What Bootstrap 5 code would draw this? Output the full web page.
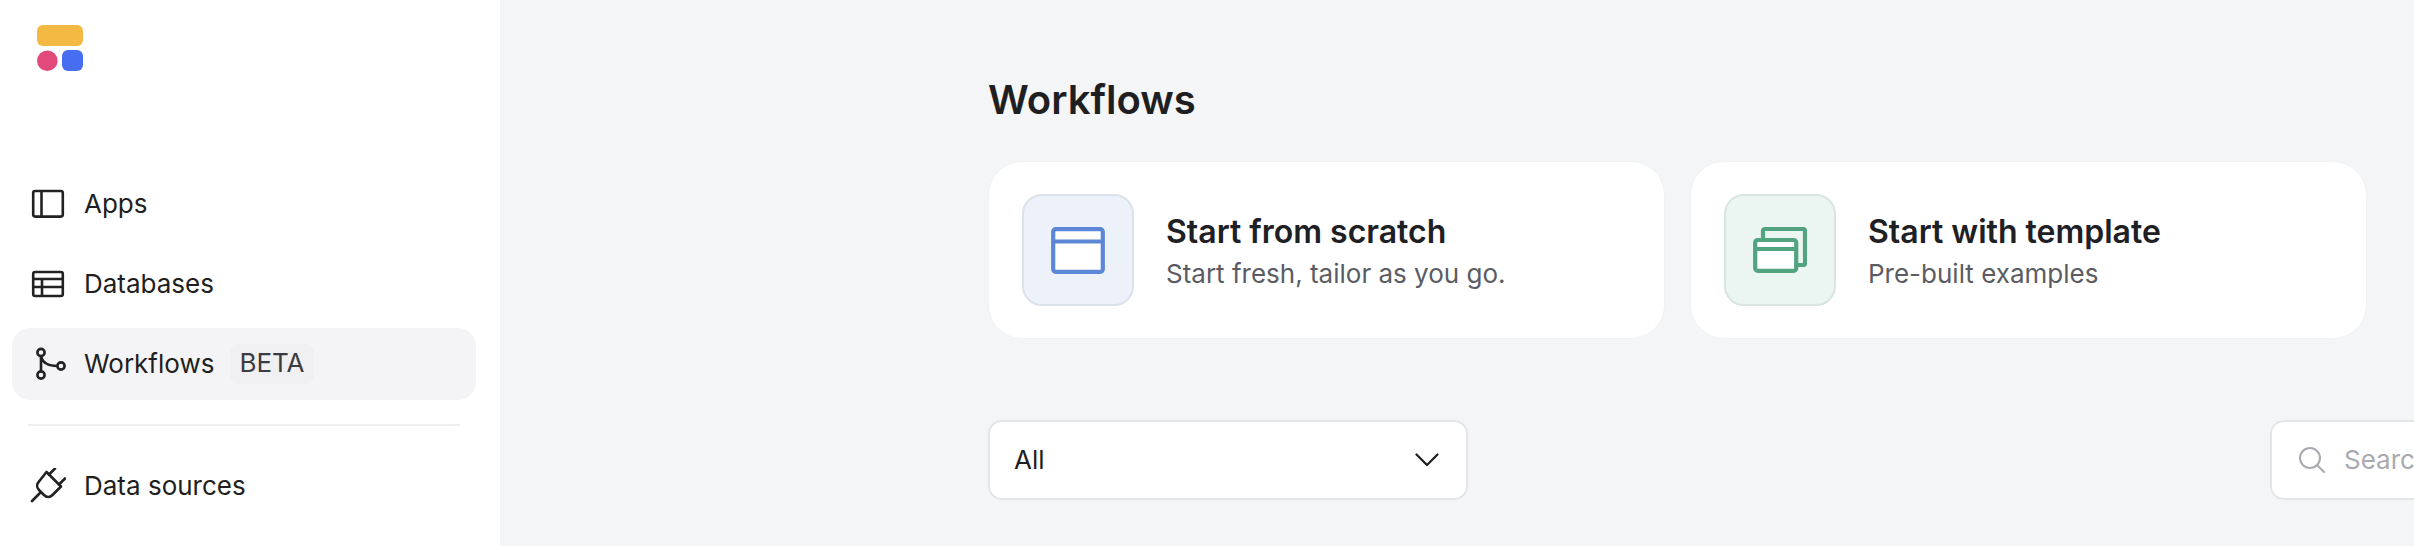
<!DOCTYPE html>
<html lang="en">
<head>
    <meta charset="UTF-8">
    <title>Workflows</title>
    <link href="https://cdn.jsdelivr.net/npm/bootstrap@5.3.0/dist/css/bootstrap.min.css" rel="stylesheet">
    <style>
        html, body {
            height: 100%;
            overflow: hidden;
        }
        body {
            background-color: #f4f5f7;
            font-family: "Inter", "Liberation Sans", sans-serif;
            color: #1f1f21;
        }
        .side-bar {
            width: 500px;
            height: 546px;
            flex: none;
            padding: 25px 24px 0 12px;
        }
        .side-logo {
            margin-left: 25px;
            margin-bottom: 97px;
            display: block;
        }
        .side-link {
            height: 72px;
            padding: 0 0 2px 18px;
            gap: 18px;
            color: #1f1f21;
            font-size: 26px;
            border-radius: 18px;
        }
        .side-link svg { margin-top: 2px; }
        .side-link:hover { color: #1f1f21; }
        .side-link.on { background-color: #f4f4f7; }
        .beta-tag {
            background-color: #f0f0f3;
            color: #3b3b41;
            font-size: 26px;
            font-weight: 400;
            padding: 0 9px;
            height: 40px;
            line-height: 38px;
            margin-top: 2px;
            border-radius: 8px;
            margin-left: -2px;
        }
        .side-line {
            margin: 24px 16px 24px 16px;
            border-top: 2px solid #eeeef3;
            opacity: 1;
        }
        .main-area {
            padding-top: 76px;
            margin-left: -500px;
            padding-left: 988px;
            width: 2650px;
            flex: none;
        }
        .page-title {
            font-size: 40px;
            line-height: 48px;
            font-weight: 600;
            margin-bottom: 37px;
            color: #1f1f21;
        }
        .start-row {
            gap: 25px;
        }
        .start-card {
            width: 677px;
            height: 178px;
            border: 1px solid #f1f2f4;
            border-radius: 34px;
            padding: 0 33px;
            gap: 32px;
        }
        .start-icon {
            width: 112px;
            height: 112px;
            flex: none;
            border-radius: 20px;
        }
        .start-icon.blue { background-color: #edf2fa; border: 2px solid #dbe2ec; }
        .start-icon.green { background-color: #ebf5f1; border: 2px solid #d8e5e0; }
        .start-text {
            padding-top: 3px;
        }
        .start-title {
            font-size: 32px;
            line-height: 42px;
            font-weight: 600;
            color: #1e2024;
        }
        .start-sub {
            font-size: 26px;
            line-height: 36px;
            margin-top: 3px;
            color: #5b5c63;
        }
        .filter-row {
            margin-top: 81px;
        }
        .type-select {
            width: 480px;
            height: 80px;
            font-size: 26px;
            color: #1f1f21;
            border: 2px solid #e4e5e8;
            border-radius: 14px;
            padding: 0 24px 2px;
            background-image: url("data:image/svg+xml,%3csvg xmlns='http://www.w3.org/2000/svg' viewBox='0 0 24 14'%3e%3cpath fill='none' stroke='%231f1f21' stroke-width='2.2' stroke-linecap='round' stroke-linejoin='round' d='M1.5 1.5 12 12 22.5 1.5'/%3e%3c/svg%3e");
            background-size: 24px 14px;
            background-position: right 27px center;
        }
        .search-box {
            width: 380px;
            height: 80px;
            border: 2px solid #e4e5e8;
            border-radius: 14px;
            padding-left: 26px;
            gap: 18px;
        }
        .search-field {
            font-size: 26px;
            padding: 0 0 2px;
            background: transparent;
        }
        .search-field::placeholder { color: #a9aab0; }
    </style>
</head>
<body>

<div class="d-flex">
    <aside class="side-bar bg-white">
        <svg class="side-logo" width="46" height="46" viewBox="0 0 46 46">
            <rect width="46" height="21" rx="6" fill="#f4b942"/>
            <circle cx="10.3" cy="35.7" r="10.3" fill="#e24a7b"/>
            <rect x="25" y="25" width="21" height="21" rx="6" fill="#476df0"/>
        </svg>

        <nav class="nav flex-column gap-2">
            <a class="nav-link side-link d-flex align-items-center" href="#">
                <svg width="36" height="36" viewBox="0 0 36 36" fill="none" stroke="#222" stroke-width="2.6" stroke-linejoin="round">
                    <rect x="3.2" y="5" width="29.6" height="25.6" rx="2"/>
                    <path d="M11.5 5v25.6"/>
                </svg>
                Apps
            </a>
            <a class="nav-link side-link d-flex align-items-center" href="#">
                <svg width="36" height="36" viewBox="0 0 36 36" fill="none" stroke="#222" stroke-width="2.6" stroke-linejoin="round">
                    <rect x="3.2" y="6" width="29.6" height="24" rx="2"/>
                    <path d="M3.2 13h29.6M3.2 21h29.6M12 13v17"/>
                </svg>
                Databases
            </a>
            <a class="nav-link side-link on d-flex align-items-center" href="#">
                <svg width="36" height="36" viewBox="0 0 36 36" fill="none" stroke="#222" stroke-width="2.6">
                    <circle cx="11" cy="6.5" r="3.6"/>
                    <circle cx="11" cy="29" r="3.6"/>
                    <circle cx="31" cy="20" r="3.6"/>
                    <path d="M11 10v15.5M11 10.5c1.5 6 6 9.500 16.500 9.500"/>
                </svg>
                <span>Workflows</span>
                <span class="beta-tag">BETA</span>
            </a>
        </nav>

        <hr class="side-line">

        <nav class="nav flex-column">
            <a class="nav-link side-link d-flex align-items-center" href="#">
                <svg width="36" height="36" viewBox="0 0 36 36" fill="none" stroke="#222" stroke-width="2.6" stroke-linecap="round" stroke-linejoin="round">
                    <path d="M16.500 4 31 18.500 22.500 27c-2.500 2.500-6 2.500-8.500 0l-5-5c-2.500-2.500-2.500-6 0-8.500z"/>
                    <path d="M2 33l8.500-8.500M25 .5l-6 6M35 10.500l-6 6"/>
                </svg>
                Data sources
            </a>
        </nav>
    </aside>

    <main class="main-area">
        <h1 class="page-title">Workflows</h1>

        <div class="d-flex start-row">
            <div class="start-card bg-white d-flex align-items-center">
                <div class="start-icon blue d-flex align-items-center justify-content-center">
                    <svg width="54" height="47" viewBox="0 0 54 47" fill="#fff" stroke="#5b87d6" stroke-width="4.200" stroke-linejoin="round">
                        <rect x="2.200" y="2.200" width="49.600" height="42.600" rx="2.500"/>
                        <path d="M2 14.500h50"/>
                    </svg>
                </div>
                <div class="start-text">
                    <div class="start-title">Start from scratch</div>
                    <div class="start-sub">Start fresh, tailor as you go.</div>
                </div>
            </div>
            <div class="start-card bg-white d-flex align-items-center">
                <div class="start-icon green d-flex align-items-center justify-content-center">
                    <svg width="54" height="46" viewBox="0 0 54 46" fill="#ebf5f1" stroke="#52a380" stroke-width="4.200" stroke-linejoin="round">
                        <path d="M10 11V4a2 2 0 0 1 2-2h38a2 2 0 0 1 2 2v32a2 2 0 0 1-2 2h-7"/>
                        <rect x="2.200" y="13" width="41" height="30.800" rx="2.500" fill="#fff"/>
                        <path d="M2 22h41"/>
                    </svg>
                </div>
                <div class="start-text">
                    <div class="start-title">Start with template</div>
                    <div class="start-sub">Pre-built examples</div>
                </div>
            </div>
        </div>

        <div class="filter-row d-flex justify-content-between">
            <select class="form-select type-select">
                <option>All</option>
            </select>
            <div class="search-box bg-white d-flex align-items-center">
                <svg width="28" height="28" viewBox="0 0 28 28" fill="none" stroke="#a9aab0" stroke-width="2" stroke-linecap="round" class="flex-shrink-0">
                    <circle cx="12" cy="12" r="10"/>
                    <path d="M19.500 19.500 26 26"/>
                </svg>
                <input class="form-control border-0 shadow-none search-field" placeholder="Search">
            </div>
        </div>
    </main>
</div>

<script src="https://cdn.jsdelivr.net/npm/bootstrap@5.3.0/dist/js/bootstrap.bundle.min.js"></script>
</body>
</html>
